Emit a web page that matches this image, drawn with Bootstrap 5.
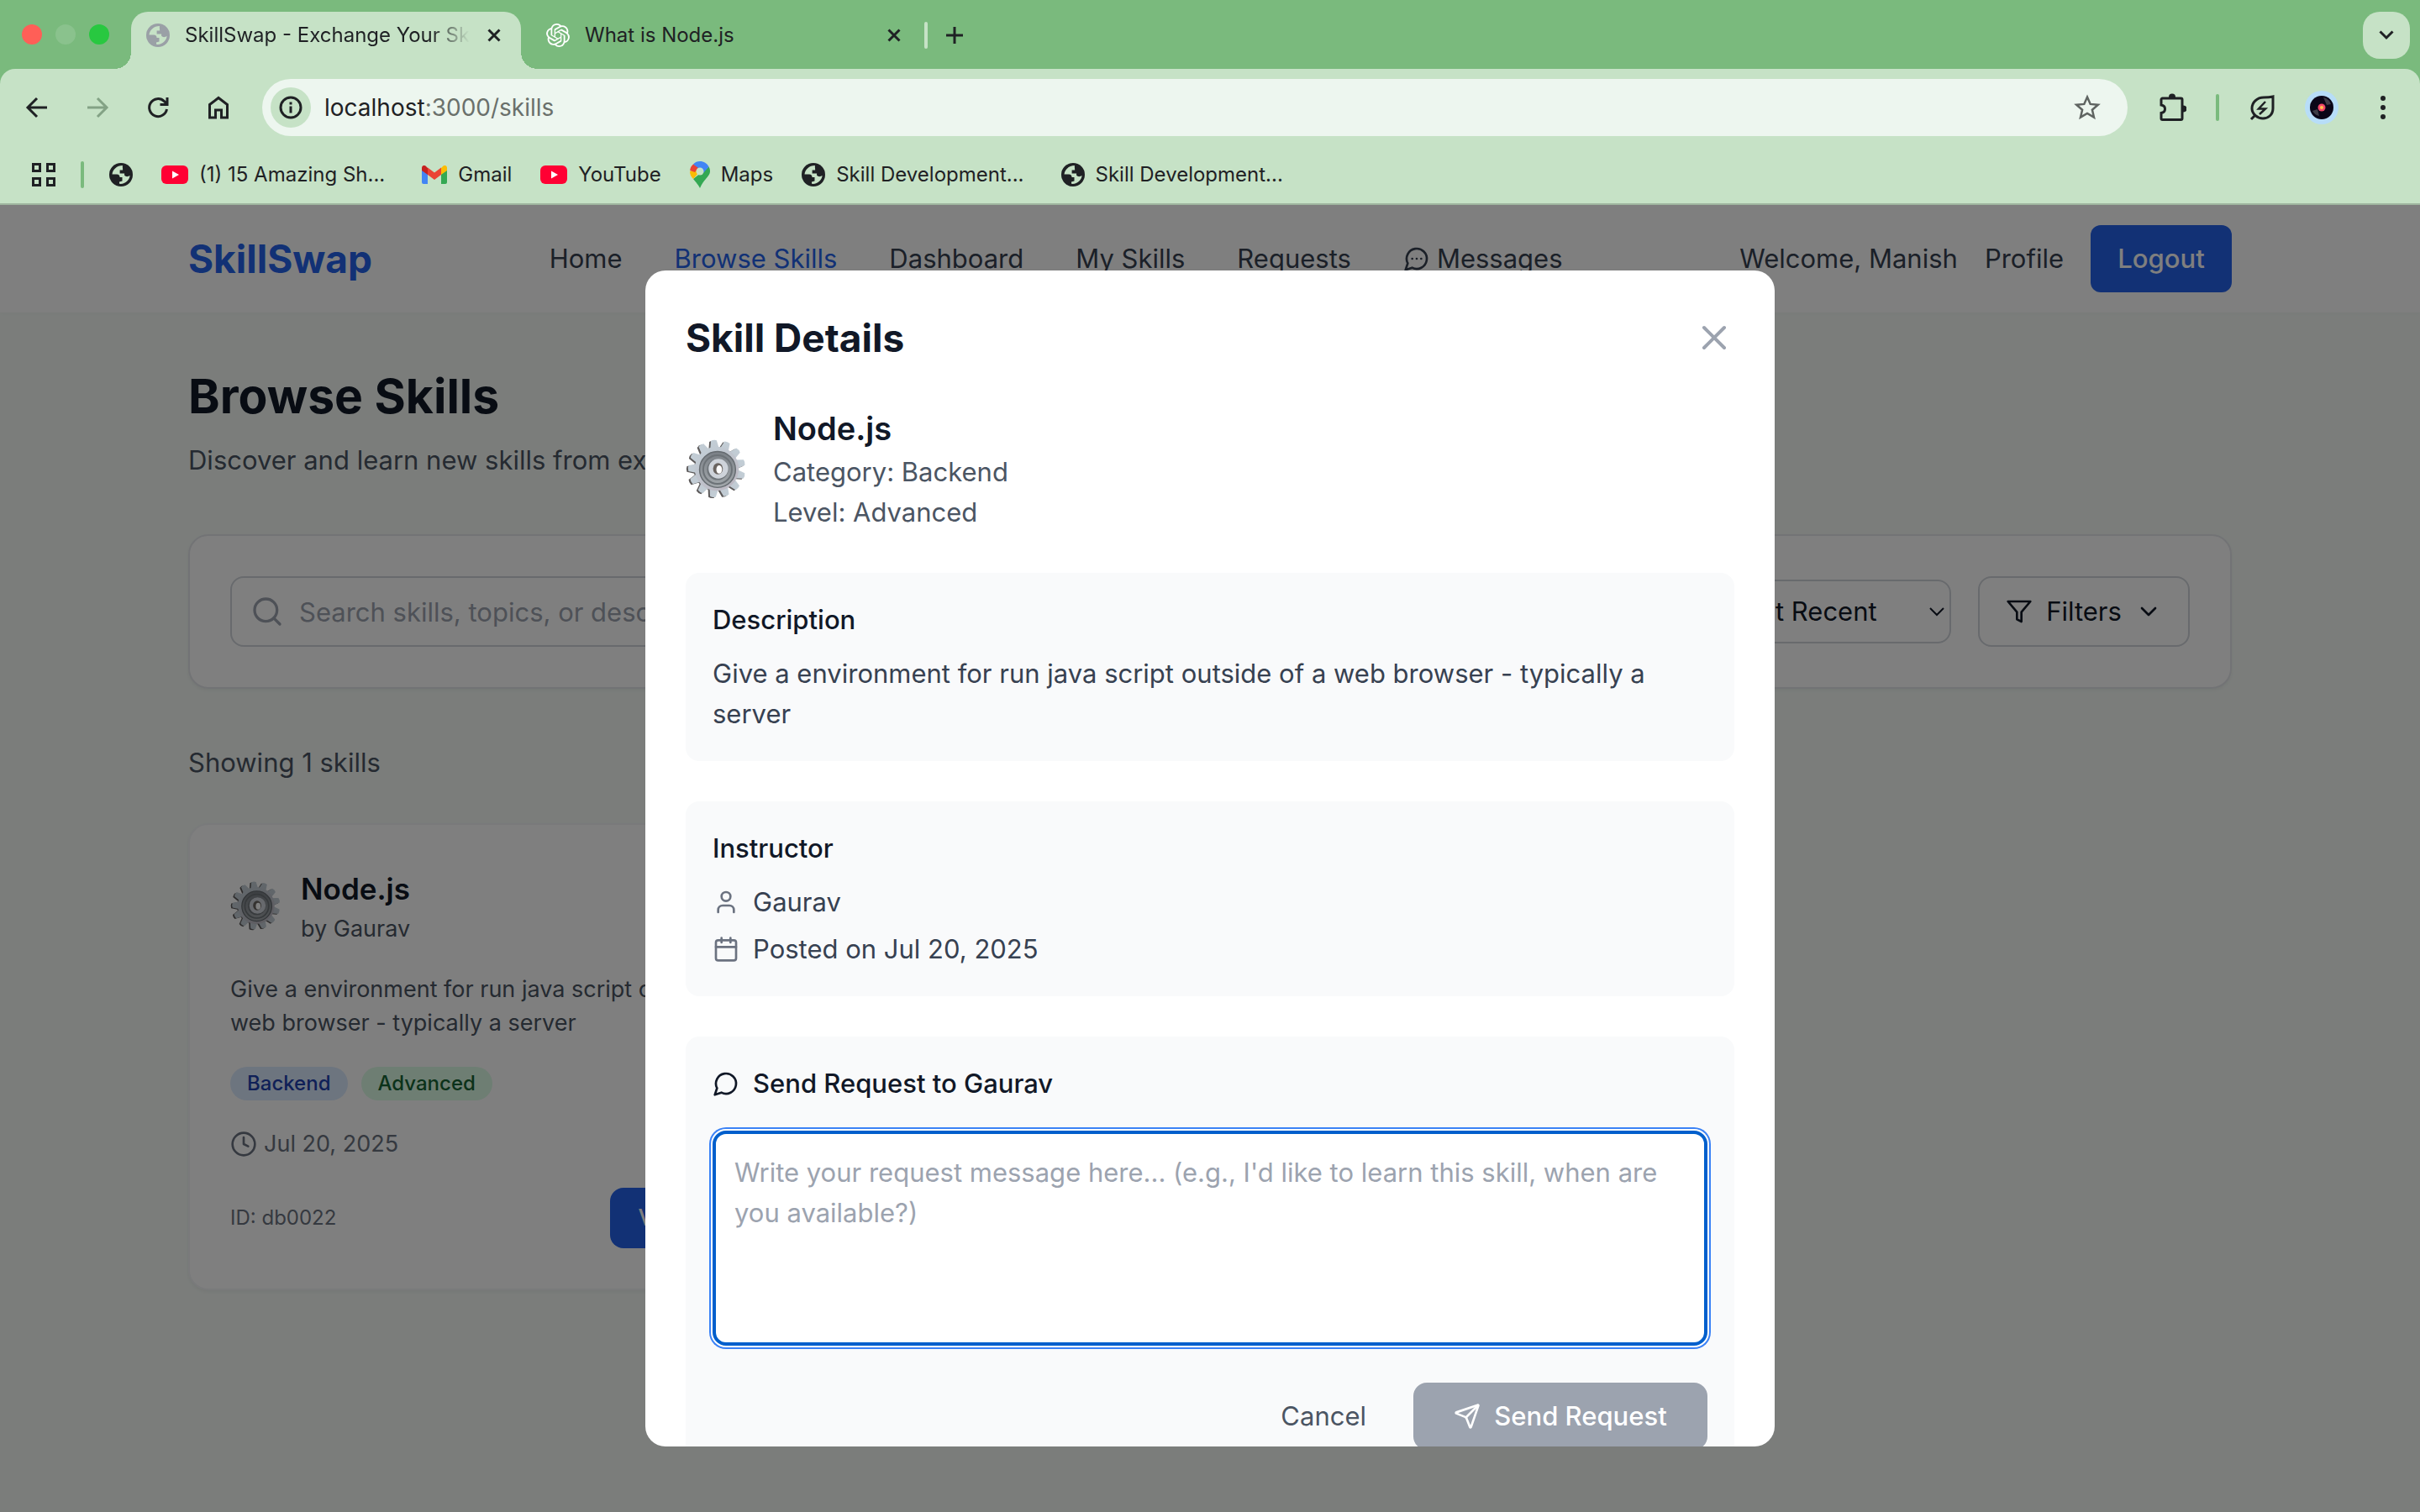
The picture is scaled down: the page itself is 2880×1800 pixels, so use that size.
<!DOCTYPE html>
<html lang="en">
<head>
<meta charset="utf-8">
<meta name="viewport" content="width=device-width, initial-scale=1">
<title>SkillSwap - Exchange Your Skills</title>
<link href="https://cdn.jsdelivr.net/npm/bootstrap@5.3.0/dist/css/bootstrap.min.css" rel="stylesheet">
<style>
  html, body { height: 100%; }
  body { font-family: Inter, "Liberation Sans", sans-serif; font-size: 31px; line-height: 48px; color: #111827; overflow: hidden; }
  svg { display: block; flex: none; }
  button, input, select, textarea { font: inherit; color: inherit; }
  .line-icon { fill: none; stroke: currentColor; stroke-width: 2; stroke-linecap: round; stroke-linejoin: round; }
  .i32 { width: 32px; height: 32px; }
  .plain { background: none; border: 0; padding: 0; }

  /* browser frame */
  .chrome { font-size: 24px; line-height: 32px; color: #1f2124; --strip: #7aba7d; --bar: #c6e2c6; }
  .strip { background: var(--strip); height: 82px; padding: 14px 12px 0 26px; }
  .lights { gap: 16px; padding-top: 15px; width: 130px; }
  .lights span { width: 24px; height: 24px; border-radius: 50%; }
  .light-red { background: #ff5f57; }
  .light-off { background: #8ac28d; }
  .light-green { background: #28c840; }
  .tab-on { position: relative; width: 464px; height: 68px; background: var(--bar); border-radius: 20px 20px 0 0; padding: 0 24px 12px 18px; gap: 18px; }
  .tab-on::before, .tab-on::after { content: ""; position: absolute; bottom: 0; width: 20px; height: 20px; }
  .tab-on::before { left: -20px; background: radial-gradient(circle at 0 0, transparent 20px, var(--bar) 20px); }
  .tab-on::after { right: -20px; background: radial-gradient(circle at 100% 0, transparent 20px, var(--bar) 20px); }
  .tab-icon { color: #9aa0a6; }
  .tab-title { flex: 1; min-width: 0; overflow: hidden; white-space: nowrap; }
  .tab-fade { -webkit-mask-image: linear-gradient(90deg, #000 86%, transparent 99%); mask-image: linear-gradient(90deg, #000 86%, transparent 99%); }
  .tab-off { width: 452px; height: 56px; padding-left: 30px; gap: 18px; }
  .tab-new { height: 56px; margin-left: 28px; gap: 22px; }
  .sep { width: 4px; height: 32px; border-radius: 2px; background: var(--strip); }
  .sep-light { background: var(--bar); }
  .tab-menu { width: 56px; height: 56px; border-radius: 20px; background: var(--bar); }
  .bar-wrap { background: var(--strip); }
  .bar { background: var(--bar); border-radius: 18px 18px 0 0; padding: 12px 28px 0; height: 102px; }
  .nav-icons { gap: 40px; width: 284px; height: 68px; }
  .dim { color: #83a285; }
  .omni { height: 68px; border-radius: 34px; background: #edf6ef; padding: 0 32px 0 10px; font-size: 28px; }
  .omni a { color: #6a706b; }
  .omni a span { color: #1f2124; }
  .star { color: #5f6461; }
  .info-dot { width: 48px; height: 48px; border-radius: 50%; background: var(--bar); }
  .tools { height: 68px; width: 320px; padding-left: 38px; gap: 35px; }
  .marks { background: var(--bar); height: 60px; padding: 0 38px 10px; border-bottom: 2px solid #9fb59f; gap: 34px; }
  .marks a { color: inherit; text-decoration: none; }
  .mark-lead { gap: 30px; }
  .mark-link { gap: 13px; }
  .mark-long { margin-right: 10px; }

  /* application page */
  .app { background: #f6fbf7; min-height: 0; }
  .wrap { max-width: 2560px; margin: 0 auto; padding: 0 64px; }
  .topbar { background: #fff; box-shadow: 0 2px 4px rgba(0,0,0,.02); }
  .topbar .wrap { height: 128px; }
  .brand { font-size: 46px; font-weight: 700; color: #2563eb; text-decoration: none; }
  .topbar .links { gap: 62px; }
  .topbar .links a, .topbar .account a, .account { color: #374151; text-decoration: none; }
  .topbar .links a.on { color: #2563eb; }
  .account { gap: 32px; }
  .logout { background: #2563eb; color: #fff; font-weight: 500; height: 80px; width: 168px; border-radius: 12px; }
  .page { padding-top: 64px; padding-bottom: 64px; }
  .page h1 { font-size: 57px; line-height: 72px; font-weight: 700; margin: 0 0 16px; }
  .soft { color: #4b5563; }
  .softer { color: #6b7280; }
  .panel { background: #fff; border: 2px solid #e5e7eb; border-radius: 24px; padding: 48px; box-shadow: 0 2px 4px rgba(0,0,0,.05); }
  .tools-panel { margin: 64px 0; gap: 32px; }
  .field { height: 84px; border: 2px solid #d1d5db; border-radius: 16px; background: #fff; }
  .search svg { position: absolute; left: 24px; top: 22px; width: 40px; height: 40px; color: #9ca3af; }
  .search input { width: 100%; padding: 0 32px 0 80px; }
  ::placeholder { color: #9ca3af; opacity: 1; }
  .pick { height: 76px; width: 298px; padding: 0 24px; appearance: none; background: #fff url("data:image/svg+xml,%3Csvg xmlns='http://www.w3.org/2000/svg' viewBox='0 0 18 11'%3E%3Cpath d='M1 1l8 8 8-8' fill='none' stroke='%23111827' stroke-width='2'/%3E%3C/svg%3E") no-repeat right 6px center / 18px 11px; }
  .filter { width: 252px; gap: 16px; }
  .results { margin: 48px 0 0; display: grid; grid-template-columns: repeat(3, 1fr); gap: 48px; }
  .skill { border-color: #f3f4f6; font-size: 27px; line-height: 40px; display: flex; flex-direction: column; gap: 32px; }
  .skill h3 { font-size: 35px; line-height: 56px; font-weight: 600; margin: 0; }
  .skill-head { gap: 24px; }
  .pill { font-size: 24px; line-height: 32px; font-weight: 500; padding: 4px 20px; border-radius: 20px; }
  .pill-blue { background: #dbeafe; color: #1e40af; }
  .pill-green { background: #dcfce7; color: #166534; }
  .tiny { font-size: 24px; }
  .view-btn { background: #2563eb; color: #fff; font-weight: 500; width: 227px; height: 72px; border-radius: 16px; }

  /* dialog over the page */
  .veil { position: absolute; inset: 0; background: rgba(0,0,0,.5); }
  .sheet { width: 1344px; max-width: 90%; height: 90%; background: #fff; border-radius: 24px; padding: 48px; overflow: hidden; }
  .sheet h2 { font-size: 46px; line-height: 64px; font-weight: 700; margin: 0; }
  .sheet h3 { font-size: 38px; line-height: 56px; font-weight: 600; margin: 0; color: #111827; }
  .sheet h4 { font-size: 31px; line-height: 48px; font-weight: 500; margin: 0 0 16px; color: #111827; }
  .close-x { color: #9ca3af; }
  .sheet-head { gap: 32px; margin-top: 48px; }
  .block { background: #f9fafb; border-radius: 16px; padding: 32px; margin-top: 48px; color: #374151; }
  .block .rows { display: grid; gap: 8px; }
  .msg { display: block; width: 100%; height: 256px; margin: 32px 0 44px; resize: none; border: 4px solid #005fcc; border-radius: 16px; padding: 22px; background: #fff; outline: 0; box-shadow: 0 0 0 2px #fff, 0 0 0 4px #3b82f6; }
  .actions { gap: 24px; }
  .cancel { padding: 0 32px; }
  .send { width: 350px; height: 80px; gap: 16px; border-radius: 16px; background: #9ca3af; color: #fff; font-weight: 500; }
</style>
<script src="https://cdn.jsdelivr.net/npm/bootstrap@5.3.0/dist/js/bootstrap.bundle.min.js"></script>
</head>
<body class="d-flex flex-column">

<svg width="0" height="0" class="position-absolute" aria-hidden="true">
  <defs>
    <symbol id="globe" viewBox="0 0 28 28">
      <circle cx="14" cy="14" r="14" fill="currentColor"/>
      <path fill="#c6e2c6" d="M16 3c-7 0-12 5-12.500 10.500h5.500c2.500 0 3.500 1.500 3.500 3.500h3v4.500l-3.500 1v2.300c7 .8 12-4.300 12.600-9.800-2 1.500-5 1.600-6.500-.2v-2.300h-5.500v-4h3.500c.2-2-.6-4 -.1-5.500z"/>
    </symbol>
    <symbol id="yt" viewBox="0 0 32 22">
      <rect width="32" height="22" rx="6" fill="#ff0033"/><path d="M13 6.500v9l8-4.500z" fill="#fff"/>
    </symbol>
    <linearGradient id="g-metal" gradientUnits="userSpaceOnUse" x1="-20" y1="-30" x2="20" y2="30"><stop offset="0" stop-color="#c3d0d8"/><stop offset="1" stop-color="#bcb6c0"/></linearGradient>
    <linearGradient id="g-disc" x1="0" y1="0" x2="0" y2="1"><stop offset="0" stop-color="#7a8086"/><stop offset="1" stop-color="#a3a8ac"/></linearGradient>
    <path id="tooth" d="M-5.500 -24L-3.500 -34.500Q0 -36 3.500 -34.500L5.500 -24z"/>
    <g id="teeth">
      <use href="#tooth" transform="rotate(-6)"/><use href="#tooth" transform="rotate(21.700)"/><use href="#tooth" transform="rotate(49.400)"/><use href="#tooth" transform="rotate(77.100)"/><use href="#tooth" transform="rotate(104.800)"/><use href="#tooth" transform="rotate(132.500)"/><use href="#tooth" transform="rotate(160.200)"/><use href="#tooth" transform="rotate(187.800)"/><use href="#tooth" transform="rotate(215.500)"/><use href="#tooth" transform="rotate(243.200)"/><use href="#tooth" transform="rotate(270.900)"/><use href="#tooth" transform="rotate(298.600)"/><use href="#tooth" transform="rotate(326.300)"/>
    </g>
    <symbol id="gear" viewBox="-38 -37 74 74">
      <g fill="#5d5a5a" transform="translate(-2 1)"><use href="#teeth"/><circle r="26"/></g>
      <g fill="url(#g-metal)"><use href="#teeth"/><circle r="27"/></g>
      <circle cx="1" cy="1" r="22" fill="url(#g-disc)" stroke="#656b70" stroke-width="1.500"/>
      <circle cx="1" cy="1" r="17.500" fill="none" stroke="#6c7277" stroke-width="2"/>
      <circle cx="1" cy="1" r="13" fill="#6f757a"/>
      <circle cx="2" r="12" fill="#ced3da"/>
      <ellipse cx="1.500" rx="6" ry="7" fill="#6a6460"/><ellipse cx="3" cy="1" rx="3.500" ry="5" fill="#fff"/>
    </symbol>
  </defs>
</svg>

<header class="chrome">
  <div class="strip d-flex">
    <div class="lights d-flex"><span class="light-red"></span><span class="light-off"></span><span class="light-green"></span></div>
    <div class="tab-on d-flex align-items-center">
      <svg class="tab-icon" width="28" height="28"><use href="#globe"/></svg>
      <span class="tab-title tab-fade">SkillSwap - Exchange Your Sk</span>
      <button class="plain" aria-label="Close tab"><svg width="16" height="16" viewBox="0 0 16 16" stroke="currentColor" stroke-width="3"><path d="M1.500 1.500l13 13M14.500 1.500l-13 13"/></svg></button>
    </div>
    <div class="tab-off d-flex align-items-center">
      <svg width="28" height="28" viewBox="0 0 24 24" fill="#fff"><path d="M22.2819 9.8211a5.9847 5.9847 0 0 0-.5157-4.9108 6.0462 6.0462 0 0 0-6.5098-2.9A6.0651 6.0651 0 0 0 4.9807 4.1818a5.9847 5.9847 0 0 0-3.9977 2.9 6.0462 6.0462 0 0 0 .7427 7.0966 5.98 5.98 0 0 0 .511 4.9107 6.051 6.051 0 0 0 6.5146 2.9001A5.9847 5.9847 0 0 0 13.2599 24a6.0557 6.0557 0 0 0 5.7718-4.2058 5.9894 5.9894 0 0 0 3.9977-2.9001 6.0557 6.0557 0 0 0-.7475-7.0729zm-9.022 12.6081a4.4755 4.4755 0 0 1-2.8764-1.0408l.1419-.0804 4.7783-2.7582a.7948.7948 0 0 0 .3927-.6813v-6.7369l2.02 1.1686a.071.071 0 0 1 .038.052v5.5826a4.504 4.504 0 0 1-4.4945 4.4944zm-9.6607-4.1254a4.4708 4.4708 0 0 1-.5346-3.0137l.142.0852 4.783 2.7582a.7712.7712 0 0 0 .7806 0l5.8428-3.3685v2.3324a.0804.0804 0 0 1-.0332.0615L9.74 19.9502a4.4992 4.4992 0 0 1-6.1408-1.6464zM2.3408 7.8956a4.485 4.485 0 0 1 2.3655-1.9728V11.6a.7664.7664 0 0 0 .3879.6765l5.8144 3.3543-2.0201 1.1685a.0757.0757 0 0 1-.071 0l-4.8303-2.7865A4.504 4.504 0 0 1 2.3408 7.872zm16.5963 3.8558L13.1038 8.364 15.1192 7.2a.0757.0757 0 0 1 .071 0l4.8303 2.7913a4.4944 4.4944 0 0 1-.6765 8.1042v-5.6772a.79.79 0 0 0-.407-.667zm2.0107-3.0231l-.142-.0852-4.7735-2.7818a.7759.7759 0 0 0-.7854 0L9.409 9.2297V6.8974a.0662.0662 0 0 1 .0284-.0615l4.8303-2.7866a4.4992 4.4992 0 0 1 6.6802 4.66zM8.3065 12.863l-2.02-1.1638a.0804.0804 0 0 1-.038-.0567V6.0742a4.4992 4.4992 0 0 1 7.3757-3.4537l-.142.0805L8.704 5.459a.7948.7948 0 0 0-.3927.6813zm1.0976-2.3654l2.602-1.4998 2.6069 1.4998v2.9994l-2.5974 1.4997-2.6067-1.4997Z"/></svg>
      <span class="tab-title">What is Node.js</span>
      <button class="plain" aria-label="Close tab"><svg width="16" height="16" viewBox="0 0 16 16" stroke="currentColor" stroke-width="3"><path d="M1.500 1.500l13 13M14.500 1.500l-13 13"/></svg></button>
    </div>
    <div class="tab-new d-flex align-items-center">
      <span class="sep sep-light"></span>
      <button class="plain" aria-label="New tab"><svg width="20" height="20" viewBox="0 0 20 20" stroke="currentColor" stroke-width="3"><path d="M10 0v20M0 10h20"/></svg></button>
    </div>
    <button class="plain tab-menu ms-auto d-flex align-items-center justify-content-center" aria-label="Search tabs"><svg width="18" height="12" viewBox="0 0 18 12" fill="none" stroke="currentColor" stroke-width="3"><path d="M1.500 1.500L9 9l7.500-7.500"/></svg></button>
  </div>

  <div class="bar-wrap"><div class="bar d-flex">
    <div class="nav-icons d-flex align-items-center">
      <button class="plain" aria-label="Back"><svg class="i32" viewBox="0 0 32 32" fill="none" stroke="currentColor" stroke-width="3"><path d="M28 16H6M16 5L5 16l11 11"/></svg></button>
      <button class="plain dim" aria-label="Forward"><svg class="i32" viewBox="0 0 32 32" fill="none" stroke="currentColor" stroke-width="3"><path d="M4 16h22M16 5l11 11-11 11"/></svg></button>
      <button class="plain" aria-label="Reload"><svg class="i32" viewBox="0 0 32 32" fill="none" stroke="currentColor" stroke-width="3"><path d="M26.500 18A10.500 10.500 0 1 1 23.500 8.600L26 11M27 4v8.500h-8.500"/></svg></button>
      <button class="plain" aria-label="Home"><svg class="i32" viewBox="0 0 32 32" fill="none" stroke="currentColor" stroke-width="3"><path d="M5.500 12.500L16 4.500l10.500 8V28H19.500v-9h-7v9H5.500z"/></svg></button>
    </div>
    <div class="omni d-flex align-items-center flex-grow-1">
      <span class="info-dot d-flex align-items-center justify-content-center"><svg width="28" height="28" viewBox="0 0 28 28" fill="none" stroke="currentColor" stroke-width="3"><circle cx="14" cy="14" r="12"/><path d="M14 12.500v8M14 7.500v3"/></svg></span>
      <a href="#" class="ms-3 text-decoration-none flex-grow-1"><span>localhost</span>:3000/skills</a>
      <button class="plain star" aria-label="Bookmark this tab"><svg class="i32" viewBox="0 0 32 32" fill="none" stroke="currentColor" stroke-width="2.500"><path d="M16 3.500l3.700 8.400 9.100.8-6.900 6 2.100 9L16 23l-8 4.700 2.100-9-6.900-6 9.100-.8z"/></svg></button>
    </div>
    <div class="tools d-flex align-items-center">
      <svg width="32" height="36" viewBox="2 2 32 36" fill="none" stroke="currentColor" stroke-width="3"><path d="M5.500 9h22a1.500 1.500 0 0 1 1.500 1.500V33a1.500 1.500 0 0 1-1.500 1.500h-22A1.500 1.500 0 0 1 4 33v-6.500c6-1 6-8.500 0-9.500v-6.500A1.500 1.500 0 0 1 5.500 9z"/><path d="M14 7.500a3 3 0 0 1 6 0zM30.500 18.500a3 3 0 0 1 0 6z" fill="currentColor" stroke-width="2"/></svg>
      <span class="sep"></span>
      <svg class="i32" viewBox="0 0 32 32" fill="none" stroke="currentColor" stroke-width="3"><path d="M29 3v14c0 8-6 12-12 12S4 24 4 17 10 4 18 4c4 0 8-.3 11-1zM3 30l5-5"/><path d="M20 9l-8 8.500h8L13 24" stroke-width="2.500"/></svg>
      <svg width="40" height="40" viewBox="0 0 40 40"><circle cx="20" cy="20" r="20" fill="#b7ddf8"/><circle cx="20" cy="20" r="14" fill="#0a0618"/><path d="M22 8a12 12 0 0 1 9 8l-5 1zM9 24l6-2 2 8a12 12 0 0 1-8-6z" fill="#3d3c46"/><circle cx="20" cy="20" r="4.500" fill="#f0476a"/><circle cx="20" cy="20" r="2" fill="#ffc24b"/></svg>
      <button class="plain ms-auto" aria-label="Menu"><svg class="i32" viewBox="0 0 32 32" fill="currentColor"><circle cx="16" cy="5" r="3"/><circle cx="16" cy="16" r="3"/><circle cx="16" cy="27" r="3"/></svg></button>
    </div>
  </div></div>

  <nav class="marks d-flex align-items-center" aria-label="Bookmarks">
    <div class="mark-lead d-flex align-items-center">
      <svg width="28" height="28" viewBox="0 0 28 28" fill="none" stroke="currentColor" stroke-width="3"><path d="M1.500 1.500h8v8h-8zM18.500 1.500h8v8h-8zM1.500 18.500h8v8h-8zM18.500 18.500h8v8h-8z"/></svg>
      <span class="sep"></span>
      <a href="#" aria-label="Bookmark"><svg width="28" height="28"><use href="#globe"/></svg></a>
    </div>
    <a href="#" class="mark-link mark-long d-flex align-items-center"><svg width="32" height="22"><use href="#yt"/></svg>(1) 15 Amazing Sh...</a>
    <a href="#" class="mark-link d-flex align-items-center"><svg width="30" height="22" viewBox="0 0 30 22"><path d="M0 3v17a2 2 0 0 0 2 2h5V9z" fill="#4285f4"/><path d="M30 3v17a2 2 0 0 1-2 2h-5V9z" fill="#34a853"/><path d="M23 3v8l7-5V3c0-3-3-4-5-2z" fill="#fbbc04"/><path d="M7 3v8L0 6V3c0-3 3-4 5-2z" fill="#c5221f"/><path d="M7 2.500l8 6 8-6V11l-8 6-8-6z" fill="#ea4335"/></svg>Gmail</a>
    <a href="#" class="mark-link d-flex align-items-center"><svg width="32" height="22"><use href="#yt"/></svg>YouTube</a>
    <a href="#" class="mark-link d-flex align-items-center"><svg width="24" height="32" viewBox="0 0 24 32"><path d="M22.500 6.500L4 21c4 5 6 7 8 11 2-5 4-7.500 7-11 3-3.500 5-6 5-9 0-2-.5-4-1.500-5.500z" fill="#34a853"/><path d="M0 12c0 3.500 1.500 6.500 4 9l7-8-4-3z" fill="#fbbc04"/><path d="M4 3.500C6 1 9 0 12 0c4.500 0 8.500 2.500 10.600 6.600L16 14 8 8z" fill="#4285f4"/><path d="M4 3.500C1.500 5.500.3 8.500 .2 11L6 13l4-5z" fill="#ea4335"/><circle cx="12" cy="12" r="4.500" fill="#c6e2c6"/></svg>Maps</a>
    <a href="#" class="mark-link mark-long d-flex align-items-center"><svg width="28" height="28"><use href="#globe"/></svg>Skill Development...</a>
    <a href="#" class="mark-link mark-long d-flex align-items-center"><svg width="28" height="28"><use href="#globe"/></svg>Skill Development...</a>
  </nav>
</header>

<div class="app position-relative flex-grow-1 overflow-hidden">
  <nav class="topbar" aria-label="Main">
    <div class="wrap d-flex align-items-center justify-content-between">
      <a class="brand" href="#">SkillSwap</a>
      <div class="links d-flex align-items-center">
        <a href="#">Home</a>
        <a href="#" class="on">Browse Skills</a>
        <a href="#">Dashboard</a>
        <a href="#">My Skills</a>
        <a href="#">Requests</a>
        <a href="#" class="d-flex align-items-center gap-2"><svg class="i32 line-icon" viewBox="0 0 24 24"><path d="M7.900 20A9 9 0 1 0 4 16.100L2 22Z"/><path d="M8 12h.01M12 12h.01M16 12h.01"/></svg>Messages</a>
      </div>
      <div class="account d-flex align-items-center">
        <span>Welcome, Manish</span>
        <a href="#">Profile</a>
        <button class="plain logout">Logout</button>
      </div>
    </div>
  </nav>

  <main class="wrap page">
    <h1>Browse Skills</h1>
    <p class="soft m-0">Discover and learn new skills from experts</p>

    <div class="panel tools-panel d-flex align-items-center">
      <div class="search position-relative flex-grow-1">
        <svg class="line-icon" viewBox="0 0 24 24"><circle cx="11" cy="11" r="8"/><path d="M21 21l-4.300-4.300"/></svg>
        <input class="field d-block" type="text" aria-label="Search skills" placeholder="Search skills, topics, or descriptions...">
      </div>
      <select class="field pick" aria-label="Sort by"><option>Most Recent</option></select>
      <button class="field filter d-flex align-items-center justify-content-center">
        <svg class="i32 line-icon" viewBox="0 0 24 24"><path d="M22 3H2l8 9.460V19l4 2v-8.540z"/></svg>Filters<svg class="i32 line-icon" viewBox="0 0 24 24"><path d="M6 9l6 6 6-6"/></svg>
      </button>
    </div>

    <p class="soft m-0">Showing 1 skills</p>

    <div class="results">
      <article class="panel skill">
        <div class="skill-head d-flex align-items-center">
          <svg width="60" height="60"><use href="#gear"/></svg>
          <div><h3>Node.js</h3><div class="soft">by Gaurav</div></div>
        </div>
        <div class="soft">Give a environment for run java script outside of a web browser - typically a server</div>
        <div class="d-flex gap-3"><span class="pill pill-blue">Backend</span><span class="pill pill-green">Advanced</span></div>
        <div class="softer d-flex align-items-center gap-2"><svg class="i32 line-icon" viewBox="0 0 24 24"><circle cx="12" cy="12" r="10"/><path d="M12 6v6l4 2"/></svg>Jul 20, 2025</div>
        <div class="d-flex align-items-center justify-content-between"><span class="tiny softer">ID: db0022</span><button class="plain view-btn">View Details</button></div>
      </article>
    </div>
  </main>

  <div class="veil d-flex align-items-center justify-content-center">
    <section class="sheet" role="dialog" aria-labelledby="sheet-title">
      <div class="d-flex align-items-center justify-content-between">
        <h2 id="sheet-title">Skill Details</h2>
        <button class="plain close-x" aria-label="Close"><svg class="line-icon" width="48" height="48" viewBox="0 0 24 24"><path d="M18 6L6 18M6 6l12 12"/></svg></button>
      </div>
      <div class="sheet-head d-flex align-items-center">
        <svg width="72" height="72"><use href="#gear"/></svg>
        <div class="soft"><h3>Node.js</h3>Category: Backend<br>Level: Advanced</div>
      </div>
      <div class="block"><h4>Description</h4>Give a environment for run java script outside of a web browser - typically a server</div>
      <div class="block">
        <h4>Instructor</h4>
        <div class="rows">
          <div class="d-flex align-items-center gap-3"><svg class="i32 line-icon softer" viewBox="0 0 24 24"><path d="M19 21v-2a4 4 0 0 0-4-4H9a4 4 0 0 0-4 4v2"/><circle cx="12" cy="7" r="4"/></svg>Gaurav</div>
          <div class="d-flex align-items-center gap-3"><svg class="i32 line-icon softer" viewBox="0 0 24 24"><path d="M8 2v4M16 2v4M3 10h18"/><rect x="3" y="4" width="18" height="18" rx="2"/></svg>Posted on Jul 20, 2025</div>
        </div>
      </div>
      <div class="block">
        <h4 class="m-0"><label for="request-text" class="d-flex align-items-center gap-3"><svg class="i32 line-icon" viewBox="0 0 24 24"><path d="M7.900 20A9 9 0 1 0 4 16.100L2 22Z"/></svg>Send Request to Gaurav</label></h4>
        <textarea class="msg" id="request-text" placeholder="Write your request message here... (e.g., I'd like to learn this skill, when are you available?)"></textarea>
        <div class="actions d-flex align-items-center justify-content-end">
          <button class="plain cancel soft">Cancel</button>
          <button class="plain send d-flex align-items-center justify-content-center"><svg class="i32 line-icon" viewBox="0 0 24 24"><path d="M14.540 21.690a.5.5 0 0 0 .94-.02l6.500-19a.5.5 0 0 0-.640-.640l-19 6.500a.5.5 0 0 0-.02.940l7.930 3.180a2 2 0 0 1 1.110 1.110z"/><path d="M21.850 2.150l-10.940 10.940"/></svg>Send Request</button>
        </div>
      </div>
    </section>
  </div>
</div>
</body>
</html>
